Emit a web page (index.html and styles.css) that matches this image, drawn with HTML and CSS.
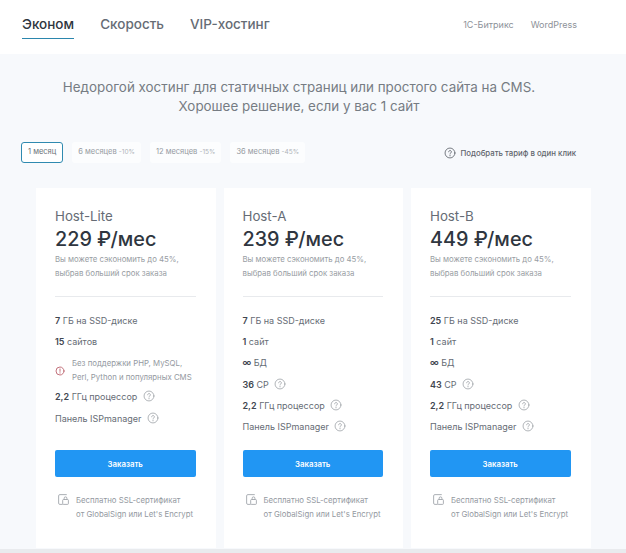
FILE: index.html
```html
<!DOCTYPE html>
<html lang="ru">
<head>
  <meta charset="UTF-8">
  <meta name="viewport" content="width=device-width, initial-scale=1.0">
  <title>Хостинг</title>
  <link rel="stylesheet" href="styles.css">
</head>
<body>
  <!-- Tabs -->
  <div class="top-bar">
    <div class="tabs">
      <div class="tab active">Эконом</div>
      <div class="tab">Скорость</div>
      <div class="tab">VIP-хостинг</div>
    </div>
    <div class="top-links">
      <span>1С-Битрикс</span>
      <span>WordPress</span>
    </div>
  </div>

  <div class="section">
    <p class="intro">Недорогой хостинг для статичных страниц или простого сайта на CMS.<br>Хорошее решение, если у вас 1 сайт</p>

    <!-- Period switch -->
    <div class="period-row">
      <div class="periods">
        <div class="period selected">1 месяц</div>
        <div class="period">6 месяцев <span class="off">-10%</span></div>
        <div class="period">12 месяцев <span class="off">-15%</span></div>
        <div class="period">36 месяцев <span class="off">-45%</span></div>
      </div>
      <div class="picker">
        <svg class="help dark" viewBox="0 0 16 16"><circle cx="8" cy="8" r="6.6"></circle><path d="M6.2 6.4a1.8 1.8 0 1 1 2.8 1.5c-.7.4-1 .8-1 1.5M8 11.2v.6"></path></svg>
        Подобрать тариф в один клик
      </div>
    </div>

    <!-- Plans -->
    <div class="plans">
      <div class="plan">
        <div class="plan-name">Host-Lite</div>
        <div class="plan-price">229 ₽/мес</div>
        <p class="plan-note">Вы можете сэкономить до 45%,<br>выбрав больший срок заказа</p>
        <ul class="features">
          <li><b>7</b> ГБ на SSD-диске</li>
          <li><b>15</b> сайтов</li>
          <li class="warning">
            <svg class="warn-icon" viewBox="0 0 16 16"><circle cx="8" cy="8" r="6.4"></circle><path d="M8 4.800v3.800M8 10.800v.6"></path></svg>
            <span>Без поддержки PHP, MySQL,<br>Perl, Python и популярных CMS</span>
          </li>
          <li><b>2,2</b> ГГц процессор <svg class="help" viewBox="0 0 16 16"><circle cx="8" cy="8" r="6.6"></circle><path d="M6.2 6.4a1.8 1.8 0 1 1 2.8 1.5c-.7.4-1 .8-1 1.5M8 11.2v.6"></path></svg></li>
          <li>Панель ISPmanager <svg class="help" viewBox="0 0 16 16"><circle cx="8" cy="8" r="6.6"></circle><path d="M6.2 6.4a1.8 1.8 0 1 1 2.8 1.5c-.7.4-1 .8-1 1.5M8 11.2v.6"></path></svg></li>
        </ul>
        <button class="order">Заказать</button>
        <div class="ssl">
          <svg class="ssl-icon" viewBox="0 0 16 16"><path d="M7 14H3.5A1.5 1.5 0 0 1 2 12.500V3.500A1.500 1.500 0 0 1 3.500 2H12"></path><rect x="7" y="8" width="7" height="6" rx="1"></rect><path d="M8.800 8V6.500a1.700 1.700 0 0 1 3.400 0V8"></path></svg>
          <span>Бесплатно SSL-сертификат<br>от GlobalSign или Let's Encrypt</span>
        </div>
      </div>

      <div class="plan">
        <div class="plan-name">Host-A</div>
        <div class="plan-price">239 ₽/мес</div>
        <p class="plan-note">Вы можете сэкономить до 45%,<br>выбрав больший срок заказа</p>
        <ul class="features">
          <li><b>7</b> ГБ на SSD-диске</li>
          <li><b>1</b> сайт</li>
          <li><b>∞</b> БД</li>
          <li><b>36</b> CP <svg class="help" viewBox="0 0 16 16"><circle cx="8" cy="8" r="6.6"></circle><path d="M6.2 6.4a1.8 1.8 0 1 1 2.8 1.5c-.7.4-1 .8-1 1.5M8 11.2v.6"></path></svg></li>
          <li><b>2,2</b> ГГц процессор <svg class="help" viewBox="0 0 16 16"><circle cx="8" cy="8" r="6.6"></circle><path d="M6.2 6.4a1.8 1.8 0 1 1 2.8 1.5c-.7.4-1 .8-1 1.5M8 11.2v.6"></path></svg></li>
          <li>Панель ISPmanager <svg class="help" viewBox="0 0 16 16"><circle cx="8" cy="8" r="6.6"></circle><path d="M6.2 6.4a1.8 1.8 0 1 1 2.8 1.5c-.7.4-1 .8-1 1.5M8 11.2v.6"></path></svg></li>
        </ul>
        <button class="order">Заказать</button>
        <div class="ssl">
          <svg class="ssl-icon" viewBox="0 0 16 16"><path d="M7 14H3.5A1.5 1.5 0 0 1 2 12.500V3.500A1.500 1.500 0 0 1 3.500 2H12"></path><rect x="7" y="8" width="7" height="6" rx="1"></rect><path d="M8.800 8V6.500a1.700 1.700 0 0 1 3.400 0V8"></path></svg>
          <span>Бесплатно SSL-сертификат<br>от GlobalSign или Let's Encrypt</span>
        </div>
      </div>

      <div class="plan">
        <div class="plan-name">Host-B</div>
        <div class="plan-price">449 ₽/мес</div>
        <p class="plan-note">Вы можете сэкономить до 45%,<br>выбрав больший срок заказа</p>
        <ul class="features">
          <li><b>25</b> ГБ на SSD-диске</li>
          <li><b>1</b> сайт</li>
          <li><b>∞</b> БД</li>
          <li><b>43</b> CP <svg class="help" viewBox="0 0 16 16"><circle cx="8" cy="8" r="6.6"></circle><path d="M6.2 6.4a1.8 1.8 0 1 1 2.8 1.5c-.7.4-1 .8-1 1.5M8 11.2v.6"></path></svg></li>
          <li><b>2,2</b> ГГц процессор <svg class="help" viewBox="0 0 16 16"><circle cx="8" cy="8" r="6.6"></circle><path d="M6.2 6.4a1.8 1.8 0 1 1 2.8 1.5c-.7.4-1 .8-1 1.5M8 11.2v.6"></path></svg></li>
          <li>Панель ISPmanager <svg class="help" viewBox="0 0 16 16"><circle cx="8" cy="8" r="6.6"></circle><path d="M6.2 6.4a1.8 1.8 0 1 1 2.8 1.5c-.7.4-1 .8-1 1.5M8 11.2v.6"></path></svg></li>
        </ul>
        <button class="order">Заказать</button>
        <div class="ssl">
          <svg class="ssl-icon" viewBox="0 0 16 16"><path d="M7 14H3.5A1.5 1.5 0 0 1 2 12.500V3.500A1.500 1.500 0 0 1 3.500 2H12"></path><rect x="7" y="8" width="7" height="6" rx="1"></rect><path d="M8.800 8V6.500a1.700 1.700 0 0 1 3.400 0V8"></path></svg>
          <span>Бесплатно SSL-сертификат<br>от GlobalSign или Let's Encrypt</span>
        </div>
      </div>
    </div>
  </div>
</body>
</html>
```

FILE: styles.css
```css
* {
  margin: 0;
  padding: 0;
  box-sizing: border-box;
  font-family: Inter, "Noto Sans", sans-serif;
}

html, body {
  height: 553px;
  overflow: hidden;
}

body {
  background-color: white;
  color: #5f6670;
}

.top-bar {
  height: 54px;
  padding: 0 49px 0 22px;
  display: flex;
  justify-content: space-between;
}

.tabs {
  display: flex;
  gap: 26px;
}

.tab {
  height: 39px;
  padding-top: 14px;
  font-size: 13.5px;
  line-height: 20px;
  font-weight: 500;
  color: #666c75;
}

.tab.active {
  color: #2f3640;
  border-bottom: 1.5px solid #2b86ad;
}

.top-links {
  display: flex;
  gap: 17px;
  padding-top: 18px;
  font-size: 9px;
  line-height: 14px;
  color: #8d9299;
}

.section {
  height: 499px;
  padding-top: 24px;
  background-color: #f7f9fc;
  border-bottom: 4px solid #e9ebee;
}

.intro {
  padding-right: 28px;
  text-align: center;
  font-size: 13.4px;
  line-height: 19px;
  color: #767c83;
}

.period-row {
  margin-top: 26px;
  padding: 0 50px 0 21px;
  display: flex;
  justify-content: space-between;
  align-items: center;
}

.periods {
  display: flex;
  gap: 9px;
}

.period {
  height: 21px;
  padding: 0 6px;
  font-size: 7.5px;
  line-height: 20px;
  color: #94999f;
  background-color: #fcfdfe;
  border-radius: 3px;
}

.period.selected {
  color: #6a7178;
  background-color: white;
  border: 1px solid #2f8ab0;
  line-height: 18px;
}

.off {
  color: #b0b4b9;
  font-size: 6.5px;
}

.picker {
  display: flex;
  align-items: center;
  gap: 4px;
  font-size: 7.8px;
  font-weight: 500;
  color: #5f656d;
}

.help {
  width: 12px;
  height: 12px;
  margin-left: 3px;
  vertical-align: -2px;
  fill: none;
  stroke: #979ca2;
  stroke-width: 1;
  stroke-linecap: round;
}

.help.dark {
  margin-left: 0;
  stroke: #4c525a;
}

.plans {
  margin-top: 25px;
  padding-left: 36px;
  display: flex;
  gap: 8px;
}

.plan {
  width: 179.5px;
  height: 360px;
  padding: 19px 20px 0 19px;
  display: flex;
  flex-direction: column;
  background-color: white;
}

.plan-name {
  font-size: 13.3px;
  line-height: 18px;
  color: #666c75;
}

.plan-price {
  margin-top: 2px;
  font-size: 19.8px;
  line-height: 24px;
  font-weight: 500;
  color: #2f3640;
}

.plan-note {
  margin-top: 2px;
  padding-bottom: 16px;
  font-size: 7.8px;
  line-height: 13.5px;
  color: #989da3;
  border-bottom: 1px solid #e8eaed;
}

.features {
  list-style: none;
  margin-top: 13px;
  font-size: 9px;
  color: #666c75;
}

.features li {
  min-height: 21.2px;
  line-height: 21px;
}

.features b {
  font-weight: 600;
  color: #3f4650;
}

.features .warning {
  display: flex;
  align-items: center;
  gap: 7px;
  font-size: 7.8px;
  color: #94999f;
  margin: 5px 0 2px;
}

.warning span {
  line-height: 13.5px;
}

.warn-icon {
  width: 10px;
  height: 10px;
  flex-shrink: 0;
  fill: none;
  stroke: #b5535f;
  stroke-width: 1.3;
  stroke-linecap: round;
}

.order {
  margin-top: auto;
  height: 27px;
  border: none;
  border-radius: 2px;
  font-size: 7.8px;
  font-weight: 600;
  color: white;
  background-color: #2196f3;
}

.ssl {
  margin: 16px 0 27px 2px;
  display: flex;
  gap: 6px;
  font-size: 7.8px;
  line-height: 14px;
  color: #94999f;
}

.ssl-icon {
  width: 13px;
  height: 13px;
  flex-shrink: 0;
  fill: none;
  stroke: #979ca2;
  stroke-width: 1;
}
```
